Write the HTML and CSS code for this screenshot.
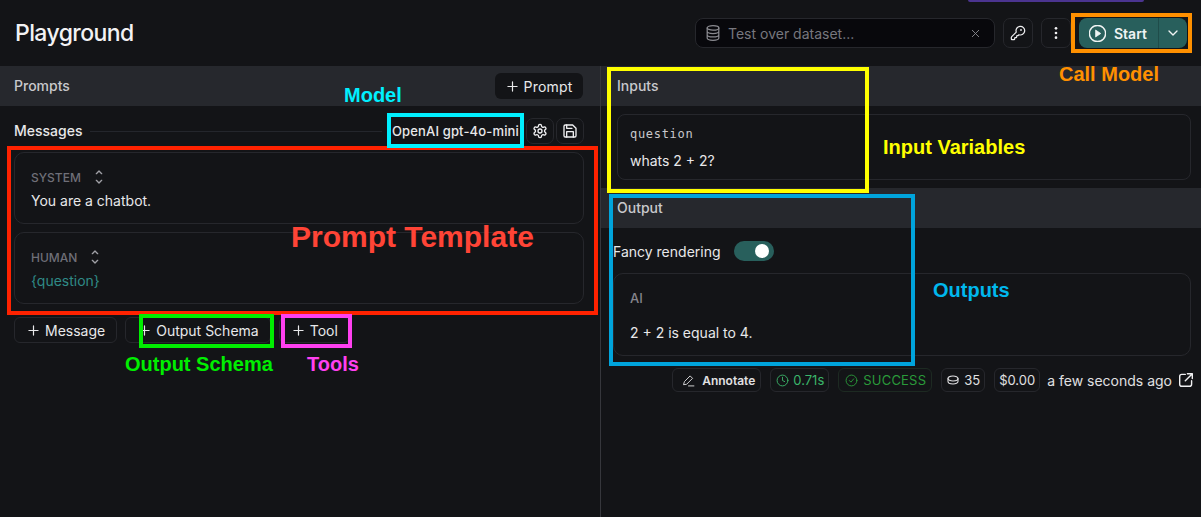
FILE: index.html
```html
<!DOCTYPE html>
<html lang="en">
<head>
    <meta charset="UTF-8">
    <meta name="viewport" content="width=device-width, initial-scale=1.0">
    <title>Playground</title>
    <link rel="stylesheet" href="styles.css">
</head>
<body>
    <div class="page">
        <div class="promo-edge"></div>

        <header class="topbar">
            <h1>Playground</h1>
            <div class="top-actions">
                <div class="dataset">
                    <svg class="ico" viewBox="3 1 18 22"><ellipse cx="12" cy="5" rx="8" ry="3"/><path d="M4 5v14c0 1.700 3.600 3 8 3s8-1.300 8-3V5M4 9.700c0 1.700 3.600 3 8 3s8-1.300 8-3M4 14.300c0 1.700 3.600 3 8 3s8-1.300 8-3"/></svg>
                    <span class="dataset-text">Test over dataset...</span>
                    <svg class="ico-x" viewBox="0 0 24 24"><path d="M5 5l14 14M19 5L5 19"/></svg>
                </div>
                <button class="icon-btn top-btn">
                    <svg class="ico-key" viewBox="0 0 24 24"><path d="M2.586 17.414A2 2 0 0 0 2 18.828V21a1 1 0 0 0 1 1h3a1 1 0 0 0 1-1v-1a1 1 0 0 1 1-1h1a1 1 0 0 0 1-1v-1a1 1 0 0 1 1-1h.172a2 2 0 0 0 1.414-.586l.814-.814a6.500 6.500 0 1 0-4-4z"/><circle cx="16.500" cy="7.500" r=".5"/></svg>
                </button>
                <button class="icon-btn top-btn">
                    <svg class="ico-dots" viewBox="0 0 24 24"><circle cx="12" cy="5" r="2"/><circle cx="12" cy="12" r="2"/><circle cx="12" cy="19" r="2"/></svg>
                </button>
                <div class="start">
                    <span class="start-main">
                        <svg class="ico-play" viewBox="1.500 1.500 21 21"><circle cx="12" cy="12" r="10"/><path class="play-tri" d="M10 8l6 4-6 4z"/></svg>
                        Start
                    </span>
                    <span class="start-more">
                        <svg class="ico-chev" viewBox="0 0 24 24"><path d="M6 9l6 6 6-6"/></svg>
                    </span>
                </div>
            </div>
        </header>

        <main class="panels">
            <section class="panel-left">
                <div class="section-head">
                    <span>Prompts</span>
                    <button class="prompt-btn"><svg class="plus" viewBox="0 0 12 12"><path d="M6 1v10M1 6h10"/></svg>Prompt</button>
                </div>
                <div class="left-body">
                    <div class="messages-row">
                        <span class="messages-title">Messages</span>
                        <span class="messages-line"></span>
                        <span class="model-name">OpenAI gpt-4o-mini</span>
                        <button class="icon-btn">
                            <svg class="ico-w" viewBox="0 0 24 24"><path d="M12.200 2h-.4a2 2 0 0 0-2 2v.2a2 2 0 0 1-1 1.700l-.4.300a2 2 0 0 1-2 0l-.200-.1a2 2 0 0 0-2.700.7l-.2.400a2 2 0 0 0 .7 2.700l.2.100a2 2 0 0 1 1 1.700v.5a2 2 0 0 1-1 1.700l-.2.100a2 2 0 0 0-.7 2.700l.2.400a2 2 0 0 0 2.700.7l.2-.1a2 2 0 0 1 2 0l.4.300a2 2 0 0 1 1 1.700v.2a2 2 0 0 0 2 2h.4a2 2 0 0 0 2-2v-.2a2 2 0 0 1 1-1.700l.4-.3a2 2 0 0 1 2 0l.2.100a2 2 0 0 0 2.700-.7l.2-.4a2 2 0 0 0-.7-2.700l-.2-.1a2 2 0 0 1-1-1.700v-.5a2 2 0 0 1 1-1.700l.2-.1a2 2 0 0 0 .7-2.700l-.2-.4a2 2 0 0 0-2.700-.7l-.2.100a2 2 0 0 1-2 0l-.4-.3a2 2 0 0 1-1-1.700V4a2 2 0 0 0-2-2z"/><circle cx="12" cy="12" r="3"/></svg>
                        </button>
                        <button class="icon-btn">
                            <svg class="ico-w" viewBox="0 0 24 24"><path d="M5 3h11l5 5v11a2 2 0 0 1-2 2H5a2 2 0 0 1-2-2V5a2 2 0 0 1 2-2z"/><path d="M7 21v-8h10v8M7 3v5h8"/></svg>
                        </button>
                    </div>

                    <div class="msg-card">
                        <div class="role">SYSTEM <svg class="updown" viewBox="0 0 24 24"><path d="M8 7l4-4 4 4M8 17l4 4 4-4"/></svg></div>
                        <div class="msg-text">You are a chatbot.</div>
                    </div>
                    <div class="msg-card">
                        <div class="role">HUMAN <svg class="updown" viewBox="0 0 24 24"><path d="M8 7l4-4 4 4M8 17l4 4 4-4"/></svg></div>
                        <div class="msg-text var">{question}</div>
                    </div>

                    <div class="add-row">
                        <button class="add-btn"><svg class="plus" viewBox="0 0 12 12"><path d="M6 1v10M1 6h10"/></svg>Message</button>
                        <button class="add-btn"><svg class="plus" viewBox="0 0 12 12"><path d="M6 1v10M1 6h10"/></svg>Output Schema</button>
                        <button class="add-btn"><svg class="plus" viewBox="0 0 12 12"><path d="M6 1v10M1 6h10"/></svg>Tool</button>
                    </div>
                </div>
            </section>

            <section class="panel-right">
                <div class="section-head right-head">Inputs</div>
                <div class="inputs-body">
                    <div class="input-card">
                        <div class="input-name">question</div>
                        <div class="msg-text">whats 2 + 2?</div>
                    </div>
                </div>
                <div class="section-head right-head">Output</div>
                <div class="output-body">
                    <div class="fancy-row">
                        <span>Fancy rendering</span>
                        <span class="toggle"><span class="knob"></span></span>
                    </div>
                    <div class="output-card">
                        <div class="ai-label">AI</div>
                        <div class="msg-text">2 + 2 is equal to 4.</div>
                    </div>
                    <div class="run-meta">
                        <span class="chip annotate">
                            <svg class="ico-sm" viewBox="0 0 24 24"><path d="M3 19l1.500-5L15 3.500l4.500 4.500L9 18.500zM12 22h10"/></svg>
                            Annotate
                        </span>
                        <span class="chip time">
                            <svg class="ico-sm" viewBox="0 0 24 24"><circle cx="12" cy="12" r="10"/><path d="M12 6v6l4 2"/></svg>
                            0.71s
                        </span>
                        <span class="chip success">
                            <svg class="ico-sm" viewBox="0 0 24 24"><circle cx="12" cy="12" r="10"/><path d="M8 12l3 3 5-6"/></svg>
                            SUCCESS
                        </span>
                        <span class="chip tokens">
                            <svg class="ico-coin" viewBox="0 0 24 18"><ellipse cx="12" cy="6" rx="10" ry="5"/><path d="M2 6v6c0 2.800 4.500 5 10 5s10-2.200 10-5V6"/></svg>
                            35
                        </span>
                        <span class="chip cost">$0.00</span>
                        <span class="ago">a few seconds ago</span>
                        <svg class="ico-ext" viewBox="2 2 20 20"><path d="M11 4H6a3 3 0 0 0-3 3v11a3 3 0 0 0 3 3h11a3 3 0 0 0 3-3v-5M14 3h7v7M21 3L11 13"/></svg>
                    </div>
                </div>
            </section>
        </main>

        <!-- hand drawn notes on top of the screenshot -->
        <div class="box box-prompt"></div>
        <div class="box box-model"></div>
        <div class="box box-schema"></div>
        <div class="box box-tool"></div>
        <div class="box box-inputs"></div>
        <div class="box box-outputs"></div>
        <div class="box box-call"></div>

        <span class="note note-model">Model</span>
        <span class="note note-prompt">Prompt Template</span>
        <span class="note note-schema">Output Schema</span>
        <span class="note note-tools">Tools</span>
        <span class="note note-inputs">Input Variables</span>
        <span class="note note-outputs">Outputs</span>
        <span class="note note-call">Call Model</span>
    </div>
</body>
</html>
```

FILE: styles.css
```css
* { box-sizing: border-box; }
html, body { margin: 0; height: 100%; }
body { background: #131417; color: #e8e8ea; font-family: Inter, "Liberation Sans", sans-serif; font-size: 14px; overflow: hidden; }
button { font-family: inherit; color: inherit; cursor: pointer; }
svg { fill: none; stroke: currentColor; stroke-width: 2; stroke-linecap: round; stroke-linejoin: round; flex: none; }

.page { position: relative; width: 1201px; height: 517px; overflow: hidden; }
.promo-edge { position: absolute; top: 0; left: 968px; width: 176px; height: 2px; background: #4b3490; border-radius: 0 0 8px 8px; }

.topbar { height: 66px; display: flex; align-items: center; justify-content: space-between; padding: 0 14px 0 15px; }
.topbar h1 { margin: 0; font-size: 23px; font-weight: 500; letter-spacing: -0.6px; color: #f2f2f4; }
.top-actions { display: flex; align-items: center; gap: 8px; }

.dataset { width: 300px; height: 30px; display: flex; align-items: center; gap: 8px; padding: 0 13px 0 10px; background: #08080c; border: 1px solid #26272c; border-radius: 8px; color: #77777e; }
.dataset-text { flex: 1; font-size: 14px; }
.ico { width: 14px; height: 16px; stroke-width: 1.700; color: #8a8a90; }
.ico-x { width: 11px; height: 11px; color: #8a8a90; }

.icon-btn { width: 28px; height: 26px; padding: 0; display: flex; align-items: center; justify-content: center; background: #131417; border: 1px solid #26272c; border-radius: 7px; }
.top-btn { width: 30px; height: 30px; }
.ico-w { width: 16px; height: 16px; color: #f0f0f2; }
.ico-key { width: 16px; height: 16px; color: #f0f0f2; stroke-width: 1.800; }
.ico-dots { width: 16px; height: 16px; fill: #f0f0f2; stroke: none; }

.start { width: 108px; height: 30px; display: flex; background: #285f5c; border-radius: 8px; color: #f0f4f4; font-weight: 600; font-size: 14px; }
.start-main { flex: 1; display: flex; align-items: center; gap: 8px; padding-left: 10px; border-right: 1px solid #1f4c4a; }
.start-more { width: 28px; display: flex; align-items: center; justify-content: center; }
.ico-play { width: 17px; height: 17px; stroke-width: 1.800; }
.play-tri { fill: currentColor; stroke-width: 1; }
.ico-chev { width: 16px; height: 16px; }

.panels { display: flex; height: 451px; }
.panel-left { width: 600px; }
.panel-right { flex: 1; border-left: 1px solid #36373c; }

.section-head { height: 40px; display: flex; align-items: center; justify-content: space-between; padding: 0 17px 0 14px; background: #26282d; font-size: 14px; line-height: 16px; font-weight: 500; color: #c8c8cc; }
.section-head > span, .right-head { padding-bottom: 1px; }
.right-head { padding-left: 16px; }
.prompt-btn { height: 26px; width: 88px; padding: 0 0 0 1px; display: flex; align-items: center; justify-content: center; gap: 6px; background: #131417; border: none; border-radius: 6px; font-size: 14px; letter-spacing: 0.2px; color: #e8e8ea; }
.plus { width: 11px; height: 11px; stroke-width: 1.300; }

.left-body { padding: 12px 16px 0 14px; }
.messages-row { display: flex; align-items: center; height: 26px; gap: 2px; margin-bottom: 8px; }
.messages-title { font-size: 14px; line-height: 16px; padding-bottom: 1px; font-weight: 500; margin-right: 6px; }
.messages-line { flex: 1; height: 1px; background: #24262c; margin-right: 2px; }
.model-name { width: 135px; padding: 0 0 1px 4px; text-align: center; font-size: 13px; line-height: 16px; font-weight: 500; letter-spacing: 0.15px; margin-right: 3px; white-space: nowrap; }

.msg-card { height: 72px; margin-bottom: 8px; padding: 15px 16px 0; border: 1px solid #26272c; border-radius: 10px; }
.role { display: flex; align-items: center; gap: 10px; height: 18px; font-size: 12px; font-weight: 500; color: #6f6f78; }
.updown { width: 16px; height: 18px; color: #a0a0a6; }
.msg-text { font-size: 14px; color: #e8e8ea; margin-top: 6px; }
.var { color: #2f8a86; }

.add-row { display: flex; gap: 8px; margin-top: 13px; }
.add-btn { height: 26px; padding: 0 11px 0 13px; display: flex; align-items: center; gap: 6px; background: #131417; border: 1px solid #26272c; border-radius: 6px; font-size: 14px; }

.inputs-body { padding: 8px 10px 8px 16px; }
.input-card { height: 66px; padding: 12px 12px 0; border: 1px solid #26272c; border-radius: 8px; }
.input-name { font-family: "DejaVu Sans Mono", "Liberation Mono", monospace; font-size: 12px; color: #c8c8cc; letter-spacing: 0.7px; }
.input-card .msg-text { margin-top: 11px; }

.output-body { padding: 13px 10px 0 12px; }
.fancy-row { display: flex; align-items: center; gap: 13px; height: 20px; font-size: 14px; }
.toggle { width: 40px; height: 20px; padding: 3px 5px; display: flex; justify-content: flex-end; background: #285f5c; border-radius: 10px; }
.knob { width: 14px; height: 14px; background: #fff; border-radius: 50%; }

.output-card { height: 83px; margin-top: 12px; padding: 16px 16px 0; border: 1px solid #26272c; border-radius: 10px; }
.ai-label { font-size: 13px; font-weight: 500; color: #85858c; }
.output-card .msg-text { margin-top: 18px; }

.run-meta { display: flex; align-items: center; justify-content: flex-end; gap: 9px; height: 24px; margin: 12px -2px 0 0; }
.chip { height: 24px; display: flex; align-items: center; gap: 4px; padding: 0 4px 0 5px; border: 1px solid #26272c; border-radius: 6px; font-size: 13px; color: #e0e0e2; white-space: nowrap; }
.ico-sm { width: 13px; height: 13px; stroke-width: 1.700; }
.annotate { font-size: 12px; font-weight: 600; gap: 7px; padding: 0 5px 0 9px; }
.time { color: #3bb56a; }
.success { color: #2a9a3a; border-color: #1d2a22; gap: 5px; padding: 0 5px 0 6px; letter-spacing: 0.200px; }
.tokens { gap: 5px; }
.cost { padding: 0 4px; }
.ico-coin { width: 12px; height: 10px; stroke-width: 2.200; }
.ago { font-size: 14px; color: #e0e0e2; white-space: nowrap; margin: 0 -2px 0 -2px; }
.ico-ext { width: 14px; height: 14px; color: #f0f0f2; }

.box { position: absolute; border-style: solid; border-width: 4px; }
.box-prompt { left: 7px; top: 146px; width: 591px; height: 169px; border-color: #ff2200; }
.box-model { left: 387px; top: 113px; width: 137px; height: 35px; border-color: #00f0ff; }
.box-schema { left: 139px; top: 314px; width: 135px; height: 34px; border-color: #00ee00; }
.box-tool { left: 281px; top: 314px; width: 71px; height: 34px; border-color: #ff40f0; }
.box-inputs { left: 607px; top: 67px; width: 262px; height: 126px; border-color: #ffff00; }
.box-outputs { left: 609px; top: 194px; width: 306px; height: 172px; border-color: #00a4dc; }
.box-call { left: 1071px; top: 13px; width: 121px; height: 40px; border-color: #ff9000; }

.note { position: absolute; font-family: "Liberation Sans", Arial, sans-serif; font-weight: 700; font-size: 20px; line-height: 24px; white-space: nowrap; }
.note-model { left: 344px; top: 83px; color: #00f0ff; }
.note-prompt { left: 291px; top: 219px; font-size: 30px; line-height: 36px; color: #ff4436; }
.note-schema { left: 125px; top: 352px; color: #00ee00; }
.note-tools { left: 307px; top: 352px; color: #ff40f0; }
.note-inputs { left: 883px; top: 135px; color: #ffff00; }
.note-outputs { left: 933px; top: 278px; color: #00b8ee; }
.note-call { left: 1059px; top: 62px; color: #ff9000; }
```
